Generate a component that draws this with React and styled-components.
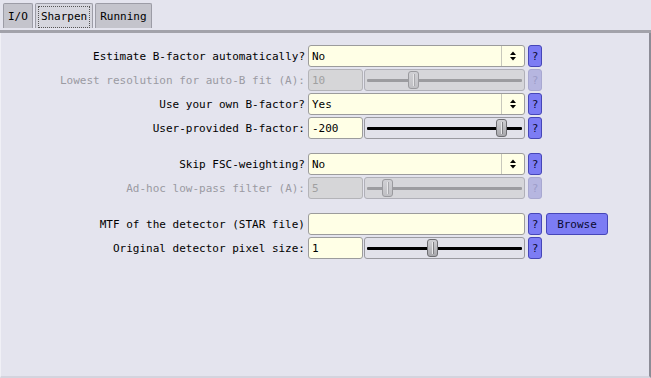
import React from "react";
import styled, { createGlobalStyle } from "styled-components";

const Global = createGlobalStyle`
  html, body { margin: 0; padding: 0; background: #e4e4ee; }
  body { font-family: "DejaVu Sans Mono", "Liberation Mono", monospace; font-size: 11px; }
`;

const Window = styled.div`
  width: 651px;
  height: 378px;
  display: flex;
  flex-direction: column;
  background: #e4e4ee;
  box-sizing: border-box;
`;

const TabBar = styled.div`
  display: flex;
  align-items: flex-start;
  gap: 2px;
  padding: 3px 0 0 3px;
  height: 33px;
  box-sizing: border-box;
  border-bottom: 3px solid #a2a2aa;
`;

const Tab = styled.div`
  position: relative;
  height: 25px;
  box-sizing: border-box;
  padding: 0 ${(p) => (p.$active ? 5 : 4)}px;
  display: flex;
  align-items: center;
  color: #000;
  background: ${(p) => (p.$active ? "#d6d6de" : "#c4c4cc")};
  border: 1px solid #9c9ca6;
  border-bottom: none;
  border-radius: 2px 2px 0 0;
  ${(p) =>
    p.$active &&
    `&::after {
      content: "";
      position: absolute;
      inset: 2px 2px 0 2px;
      border: 1px dotted #555;
    }`}
`;

const Panel = styled.div`
  flex: 1;
  display: flex;
  flex-direction: column;
  gap: 14px;
  padding-top: 12px;
  border-left: 1px solid #f0f0f6;
  border-right: 2px solid #8c8c96;
  border-bottom: 2px solid #d4d4de;
  box-sizing: border-box;
`;

const Section = styled.div`
  display: flex;
  flex-direction: column;
  gap: 2px;
`;

const Row = styled.div`
  display: flex;
  align-items: center;
  height: 22px;
`;

const Label = styled.div`
  width: 304px;
  margin-right: 3px;
  text-align: right;
  white-space: nowrap;
  color: ${(p) => (p.$disabled ? "#9a9aa2" : "#000")};
`;

const Field = styled.div`
  width: ${(p) => p.$w}px;
  height: 22px;
  box-sizing: border-box;
  border: 1px solid ${(p) => (p.$disabled ? "#b4b4b8" : "#9c9c9c")};
  border-radius: 3px;
  background: ${(p) => (p.$disabled ? "#d6d6d8" : "#ffffe6")};
  color: ${(p) => (p.$disabled ? "#a0a0a0" : "#000")};
  display: flex;
  align-items: center;
  padding-left: 3px;
  white-space: nowrap;
`;

const ChoiceBox = styled(Field)`
  padding-left: 3px;
  padding-right: 0;
`;

const ChoiceText = styled.span`
  flex: 1;
`;

const ChoiceArrows = styled.div`
  width: 22px;
  height: 100%;
  border-left: 1px solid #c8c8bc;
  display: flex;
  align-items: center;
  justify-content: center;
`;

const SliderBox = styled.div`
  position: relative;
  margin-left: 1px;
  width: 161px;
  height: 22px;
  box-sizing: border-box;
  border: 1px solid ${(p) => (p.$disabled ? "#b0b0b8" : "#9a9aa0")};
  border-radius: 3px;
  background: ${(p) => (p.$disabled ? "#d6d6da" : "#e2e2ea")};
  display: flex;
  align-items: center;
  padding: 0 2px;
`;

const Track = styled.div`
  flex: 1;
  height: 3px;
  background: ${(p) => (p.$disabled ? "#9c9ca0" : "#000")};
  border-radius: 1px;
`;

const Knob = styled.div`
  position: absolute;
  top: 1px;
  width: 11px;
  height: 18px;
  box-sizing: border-box;
  margin-left: -6px;
  border: 1px solid ${(p) => (p.$disabled ? "#9a9a9e" : "#6e6e72")};
  border-radius: 3px;
  background: ${(p) =>
    p.$disabled
      ? "linear-gradient(#d0d0d4, #c0c0c4)"
      : "linear-gradient(#d0d0d4, #a8a8ac)"};
  &::after {
    content: "";
    position: absolute;
    left: 4px;
    top: 2px;
    bottom: 2px;
    width: 1px;
    background: ${(p) => (p.$disabled ? "#e6e6e8" : "#e8e8ea")};
    box-shadow: 1px 0 0 ${(p) => (p.$disabled ? "#a8a8ac" : "#808084")};
  }
`;

const Help = styled.div`
  margin-left: 3px;
  width: 14px;
  height: 22px;
  box-sizing: border-box;
  border: 1px solid ${(p) => (p.$disabled ? "#a8a8d0" : "#4646b8")};
  border-radius: 3px;
  background: ${(p) => (p.$disabled ? "#b6b6e0" : "#7c7cf4")};
  color: ${(p) => (p.$disabled ? "#9c9cc8" : "#0a0a30")};
  display: flex;
  align-items: center;
  justify-content: center;
`;

const Browse = styled.div`
  margin-left: 4px;
  width: 62px;
  height: 22px;
  box-sizing: border-box;
  border: 1px solid #4646b8;
  border-radius: 3px;
  background: #7c7cf4;
  color: #0a0a30;
  display: flex;
  align-items: center;
  justify-content: center;
`;

function Arrows() {
  return (
    <svg width="8" height="12" viewBox="0 0 8 12">
      <path d="M1 5 L4 1.5 L7 5 Z" fill="#000" />
      <path d="M1 7 L4 10.5 L7 7 Z" fill="#000" />
    </svg>
  );
}

function ChoiceRow({ label, value }) {
  return (
    <Row>
      <Label>{label}</Label>
      <ChoiceBox $w={217}>
        <ChoiceText>{value}</ChoiceText>
        <ChoiceArrows>
          <Arrows />
        </ChoiceArrows>
      </ChoiceBox>
      <Help>?</Help>
    </Row>
  );
}

function SliderRow({ label, value, pos, disabled }) {
  return (
    <Row>
      <Label $disabled={disabled}>{label}</Label>
      <Field $w={55} $disabled={disabled}>
        {value}
      </Field>
      <SliderBox $disabled={disabled}>
        <Track $disabled={disabled} />
        <Knob $disabled={disabled} style={{ left: `${pos}px` }} />
      </SliderBox>
      <Help $disabled={disabled}>?</Help>
    </Row>
  );
}

export default function App() {
  return (
    <>
      <Global />
      <Window>
        <TabBar>
          <Tab>I/O</Tab>
          <Tab $active>Sharpen</Tab>
          <Tab>Running</Tab>
        </TabBar>
        <Panel>
          <Section>
            <ChoiceRow label="Estimate B-factor automatically?" value="No" />
            <SliderRow
              label="Lowest resolution for auto-B fit (A):"
              value="10"
              pos={49}
              disabled
            />
            <ChoiceRow label="Use your own B-factor?" value="Yes" />
            <SliderRow label="User-provided B-factor:" value="-200" pos={137} />
          </Section>
          <Section>
            <ChoiceRow label="Skip FSC-weighting?" value="No" />
            <SliderRow
              label="Ad-hoc low-pass filter (A):"
              value="5"
              pos={23}
              disabled
            />
          </Section>
          <Section>
            <Row>
              <Label>MTF of the detector (STAR file)</Label>
              <Field $w={217} />
              <Help>?</Help>
              <Browse>Browse</Browse>
            </Row>
            <SliderRow label="Original detector pixel size:" value="1" pos={68} />
          </Section>
        </Panel>
      </Window>
    </>
  );
}
